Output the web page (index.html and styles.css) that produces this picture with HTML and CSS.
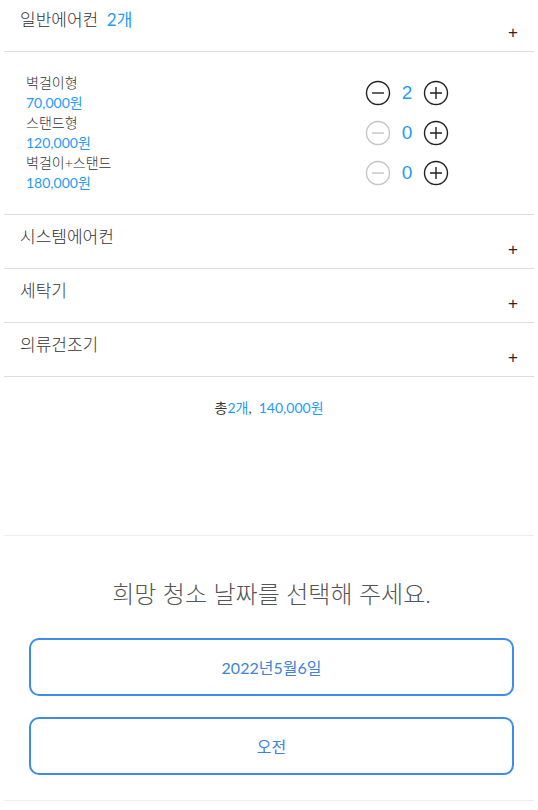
FILE: index.html
```html
<!DOCTYPE html>
<html lang="ko">
<head>
    <meta charset="UTF-8">
    <meta name="viewport" content="width=device-width, initial-scale=1.0">
    <title>청소 예약</title>
    <link rel="stylesheet" href="styles.css">
</head>
<body>
    <div class="page">
        <div class="category open">
            <div class="category-head">
                <div class="category-title">일반에어컨 <span class="count">2개</span></div>
                <span class="toggle">+</span>
            </div>
            <div class="category-body">
                <div class="item">
                    <div class="item-info">
                        <div class="item-name">벽걸이형</div>
                        <div class="item-price">70,000원</div>
                    </div>
                    <div class="counter">
                        <svg class="btn" viewBox="0 0 26 26"><circle cx="13" cy="13" r="11.5"/><path d="M7 13h12"/></svg>
                        <span class="qty">2</span>
                        <svg class="btn" viewBox="0 0 26 26"><circle cx="13" cy="13" r="11.5"/><path d="M7 13h12M13 7v12"/></svg>
                    </div>
                </div>
                <div class="item">
                    <div class="item-info">
                        <div class="item-name">스탠드형</div>
                        <div class="item-price">120,000원</div>
                    </div>
                    <div class="counter">
                        <svg class="btn disabled" viewBox="0 0 26 26"><circle cx="13" cy="13" r="11.5"/><path d="M7 13h12"/></svg>
                        <span class="qty">0</span>
                        <svg class="btn" viewBox="0 0 26 26"><circle cx="13" cy="13" r="11.5"/><path d="M7 13h12M13 7v12"/></svg>
                    </div>
                </div>
                <div class="item">
                    <div class="item-info">
                        <div class="item-name">벽걸이+스탠드</div>
                        <div class="item-price">180,000원</div>
                    </div>
                    <div class="counter">
                        <svg class="btn disabled" viewBox="0 0 26 26"><circle cx="13" cy="13" r="11.5"/><path d="M7 13h12"/></svg>
                        <span class="qty">0</span>
                        <svg class="btn" viewBox="0 0 26 26"><circle cx="13" cy="13" r="11.5"/><path d="M7 13h12M13 7v12"/></svg>
                    </div>
                </div>
            </div>
        </div>

        <div class="category">
            <div class="category-head">
                <div class="category-title">시스템에어컨</div>
                <span class="toggle">+</span>
            </div>
        </div>
        <div class="category">
            <div class="category-head">
                <div class="category-title">세탁기</div>
                <span class="toggle">+</span>
            </div>
        </div>
        <div class="category">
            <div class="category-head">
                <div class="category-title">의류건조기</div>
                <span class="toggle">+</span>
            </div>
        </div>

        <div class="total">총<span class="blue">2개</span>, &nbsp;<span class="blue">140,000원</span></div>

        <div class="schedule">
            <h2 class="schedule-title">희망 청소 날짜를 선택해 주세요.</h2>
            <button class="pick">2022년5월6일</button>
            <button class="pick">오전</button>
        </div>
    </div>
</body>
</html>
```

FILE: styles.css
```css
* {
    margin: 0;
    padding: 0;
    box-sizing: border-box;
}

body {
    font-family: 'Lato', 'Noto Sans CJK KR', sans-serif;
    font-weight: 300;
    color: #333;
    background: #fff;
}

.page {
    padding: 0 4px;
}

.category {
    border-bottom: 1px solid #dcdce2;
}

.category-head {
    height: 53px;
    display: flex;
    justify-content: space-between;
    padding: 9px 16px 0 16px;
}

.category:first-child .category-head {
    height: 51px;
    padding-top: 7px;
}

.category-title {
    font-size: 17px;
    line-height: 26px;
    color: #333;
}

.count {
    color: #1e9bff;
    margin-left: 4px;
    font-weight: 400;
}

.toggle {
    align-self: flex-end;
    font-family: 'Liberation Sans', sans-serif;
    font-weight: 400;
    font-size: 17px;
    line-height: 20px;
    margin-bottom: 8px;
    color: #3b1a2a;
}

.category-body {
    border-top: 1px solid #dcdce2;
    padding: 21px 0 21px 22px;
}

.item {
    display: flex;
    align-items: center;
    justify-content: space-between;
    height: 40px;
    padding-right: 86px;
}

.item-name {
    font-size: 14px;
    line-height: 20px;
    color: #333;
}

.item-price {
    font-size: 14px;
    font-weight: 400;
    line-height: 20px;
    color: #1e9bff;
}

.counter {
    display: flex;
    align-items: center;
    gap: 10px;
    margin-right: -1px;
}

.btn {
    width: 26px;
    height: 26px;
    fill: none;
    stroke: #222;
    stroke-width: 1.4;
}

.btn.disabled {
    stroke: #c4c4c4;
}

.qty {
    font-family: 'Liberation Sans', sans-serif;
    font-weight: 400;
    font-size: 19px;
    color: #1e9bff;
    width: 12px;
    text-align: center;
}

.total {
    text-align: center;
    font-size: 14px;
    font-weight: 400;
    padding-top: 20px;
    height: 159px;
    border-bottom: 1px solid #eee;
}

.blue {
    color: #1e9bff;
}

.schedule {
    display: flex;
    flex-direction: column;
    align-items: center;
    padding: 41px 20px 25px 25px;
    border-bottom: 1px solid #eee;
}

.schedule-title {
    font-size: 24px;
    font-weight: 300;
    color: #555;
    line-height: 34px;
    margin-bottom: 27px;
}

.pick {
    width: 100%;
    height: 58px;
    border: 2px solid #3d8bea;
    border-radius: 10px;
    background: #fff;
    font-family: 'Lato', 'Noto Sans CJK KR', sans-serif;
    font-weight: 400;
    font-size: 16px;
    color: #3d82dc;
    margin-bottom: 21px;
}

.pick:last-child {
    margin-bottom: 0;
}
```
